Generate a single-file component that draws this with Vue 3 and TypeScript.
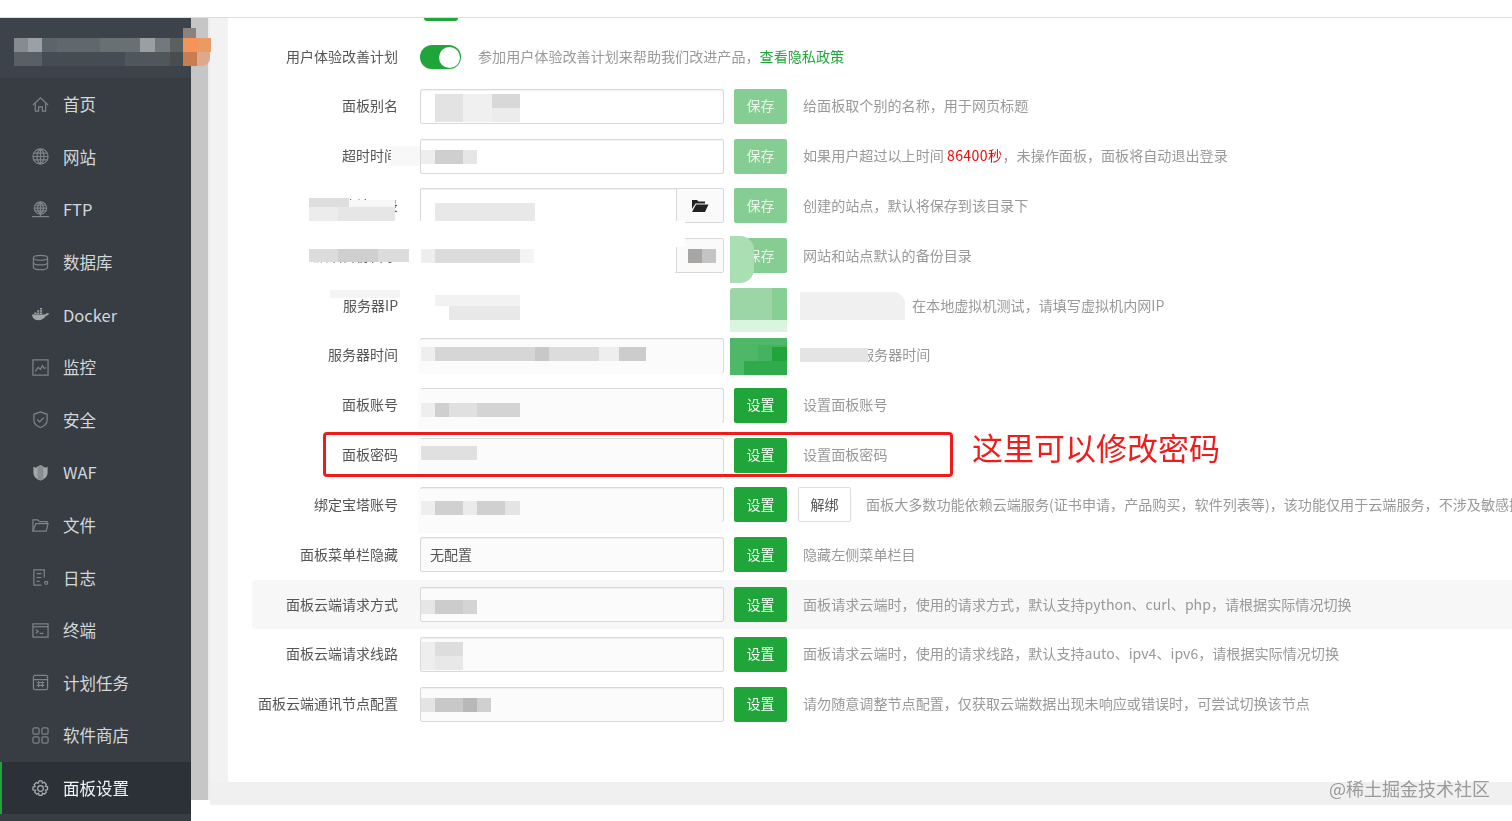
<script setup lang="ts">
interface NavItem { label: string; paths: string[]; filled?: boolean; active?: boolean }
interface DescPart { t: string; c?: string }
interface Row {
  label: string
  btn: string
  desc: DescPart[]
  value?: string
  pale?: boolean
  addon?: boolean
  unbind?: boolean
  shaded?: boolean
  filled?: boolean
  offset?: number
}
type Patch = [number, number, number, number, string, string?]

const nav: NavItem[] = [
  { label: '首页', paths: ['M1 9.5 9 2l8 7.5', 'M3.5 7.5V16H7v-4.5h4V16h3.5V7.5'] },
  { label: '网站', paths: ['M9 1a8 8 0 1 0 0 16a8 8 0 1 0 0-16z', 'M1 9h16M2 5.5h14M2 12.5h14M9 1v16', 'M9 1c-5 4-5 12 0 16M9 1c5 4 5 12 0 16'] },
  { label: 'FTP', paths: ['M9 1a6.5 6.5 0 1 0 0 13a6.5 6.5 0 1 0 0-13z', 'M2.5 7.5h13M9 1v13M3.5 4.5h11M3.5 10.5h11', 'M9 1c-4 3-4 10 0 13M9 1c4 3 4 10 0 13', 'M0 16.5h18M9 14v2.5'] },
  { label: '数据库', paths: ['M1.5 4c0-3.5 15-3.5 15 0v10c0 3.5-15 3.5-15 0z', 'M1.5 4c0 3.5 15 3.5 15 0', 'M1.5 9c0 3.5 15 3.5 15 0'] },
  { label: 'Docker', filled: true, paths: ['M0 9h14c.5-1 2-1.500 4-1-.3 1.500-1.500 2.300-3.300 2.300C13 13.500 10 15 6.500 15 2.500 15 .3 12.500 0 9zM2.500 6.800h2.200v1.700H2.500zM5.500 6.800h2.200v1.700H5.500zM8.500 6.800h2.200v1.700H8.500zM5.500 4.400h2.200v1.700H5.500zM8.500 4.400h2.200v1.700H8.500zM8.500 2h2.200v1.700H8.500z'] },
  { label: '监控', paths: ['M1 1h16v16H1z', 'M3.5 13l3-4 2.5 2 2-4 2 3 2-1'] },
  { label: '安全', paths: ['M9 1l7 2.5v6c0 4-3.5 6.7-7 8-3.5-1.3-7-4-7-8v-6z', 'M5.5 9l2.5 2.5 4.5-4.5'] },
  { label: 'WAF', filled: true, paths: ['M1.5 3l2.5 1 2.5-1.5L9 1l2.5 1.5L14 4l2.500-1v6.500c0 4-3.500 6.700-7.500 8-4-1.300-7.500-4-7.500-8z', 'M6 3.500 9 1l3 2.500v11.500L9 17.500 6 15.500z'] },
  { label: '文件', paths: ['M1 15V3h5l2 2h8v2', 'M1 15h14l2-8H4z'] },
  { label: '日志', paths: ['M13 9V1H2v16h8', 'M5 5h5M5 9h5M5 13h3', 'M15 13a1.600 1.600 0 1 0 0 3.200a1.600 1.600 0 1 0 0-3.200z'] },
  { label: '终端', paths: ['M1 2h16v14H1z', 'M1 5h16', 'M4 8l2.500 2L4 12M8 12h4'] },
  { label: '计划任务', paths: ['M1.500 3A1.500 1.500 0 0 1 3 1.500h12A1.500 1.500 0 0 1 16.500 3v12a1.500 1.500 0 0 1-1.500 1.500H3A1.500 1.500 0 0 1 1.500 15z', 'M1.500 6h15M5 9h8M5 12h8M7 8v6M11 8v6'] },
  { label: '软件商店', paths: ['M1 2.500A1.500 1.500 0 0 1 2.500 1H6a1.500 1.500 0 0 1 1.500 1.500V6A1.500 1.500 0 0 1 6 7.500H2.500A1.500 1.500 0 0 1 1 6z', 'M10.500 2.500A1.500 1.500 0 0 1 12 1h3.500A1.500 1.500 0 0 1 17 2.500V6a1.500 1.500 0 0 1-1.500 1.500H12A1.500 1.500 0 0 1 10.500 6z', 'M1 12a1.500 1.500 0 0 1 1.500-1.500H6A1.500 1.500 0 0 1 7.500 12v3.500A1.500 1.500 0 0 1 6 17H2.500A1.500 1.500 0 0 1 1 15.500z', 'M10.500 12a1.500 1.500 0 0 1 1.500-1.500h3.500A1.500 1.500 0 0 1 17 12v3.500a1.500 1.500 0 0 1-1.500 1.500H12a1.500 1.500 0 0 1-1.500-1.500z'] },
  { label: '面板设置', active: true, paths: ['M9 6a3 3 0 1 0 0 6a3 3 0 1 0 0-6z', 'M7.500 1h3l.5 2.300 2-.9 2.200 2.200-1 2 2.300.6v3l-2.300.6 1 2-2.200 2.200-2-1-.5 2.300h-3l-.5-2.300-2 1-2.200-2.200 1-2L1 10.500v-3l2.300-.6-1-2 2.200-2.200 2 .9z'] },
]

const rows: Row[] = [
  { label: '面板别名', btn: '保存', pale: true, desc: [{ t: '给面板取个别的名称，用于网页标题' }] },
  { label: '超时时间', btn: '保存', pale: true, desc: [{ t: '如果用户超过以上时间 ' }, { t: '86400秒', c: 'red' }, { t: '，未操作面板，面板将自动退出登录' }] },
  { label: '默认建站目录', btn: '保存', pale: true, addon: true, desc: [{ t: '创建的站点，默认将保存到该目录下' }] },
  { label: '默认备份目录', btn: '保存', pale: true, addon: true, desc: [{ t: '网站和站点默认的备份目录' }] },
  { label: '服务器IP', btn: '保存', pale: true, offset: 109, desc: [{ t: '在本地虚拟机测试，请填写虚拟机内网IP' }] },
  { label: '服务器时间', btn: '设置', offset: 57, desc: [{ t: '服务器时间' }] },
  { label: '面板账号', btn: '设置', filled: true, desc: [{ t: '设置面板账号' }] },
  { label: '面板密码', btn: '设置', filled: true, desc: [{ t: '设置面板密码' }] },
  { label: '绑定宝塔账号', btn: '设置', filled: true, unbind: true, desc: [{ t: '面板大多数功能依赖云端服务(证书申请，产品购买，软件列表等)，该功能仅用于云端服务，不涉及敏感操作' }] },
  { label: '面板菜单栏隐藏', btn: '设置', filled: true, value: '无配置', desc: [{ t: '隐藏左侧菜单栏目' }] },
  { label: '面板云端请求方式', btn: '设置', filled: true, shaded: true, desc: [{ t: '面板请求云端时，使用的请求方式，默认支持python、curl、php，请根据实际情况切换' }] },
  { label: '面板云端请求线路', btn: '设置', filled: true, desc: [{ t: '面板请求云端时，使用的请求线路，默认支持auto、ipv4、ipv6，请根据实际情况切换' }] },
  { label: '面板云端通讯节点配置', btn: '设置', filled: true, desc: [{ t: '请勿随意调整节点配置，仅获取云端数据出现未响应或错误时，可尝试切换该节点' }] },
]

const patches: Patch[] = [
  // logo
  [14, 38, 14, 14, '#858b91'], [28, 38, 14, 14, '#9aa0a5'], [42, 38, 15, 14, '#5c656b'], [57, 38, 43, 14, '#5f696d'],
  [100, 38, 40, 14, '#687074'], [140, 38, 15, 14, '#9aa0a2'], [155, 38, 15, 14, '#72797c'], [170, 38, 13, 14, '#5a5f5f'],
  [14, 52, 28, 14, '#585f66'], [42, 52, 83, 14, '#454c53'], [125, 52, 45, 14, '#4f565c'], [170, 52, 13, 14, '#4a4d50'],
  [183, 28, 13, 10, '#8a827c'], [183, 38, 14, 14, '#f59458'], [197, 38, 14, 14, '#eb9a64'], [183, 52, 14, 14, '#c77c52'], [197, 52, 13, 14, '#dda98a', '0 0 8px 0'],
  // white smears
  [400, 128, 300, 9, '#ffffff'], [395, 221, 290, 26, '#ffffff'], [395, 232, 280, 50, '#ffffff'], [310, 240, 100, 22, '#ffffff'],
  [415, 282, 310, 44, '#ffffff'], [418, 340, 304, 34, '#fbfbfb'], [418, 389, 304, 40, '#fbfbfb'], [418, 439, 304, 34, '#fbfbfb'],
  [418, 489, 304, 44, '#fbfbfb'], [391, 146, 29, 20, '#f8f8f8'], [330, 290, 70, 8, '#f4f4f4'],
  // labels
  [345, 200, 50, 8, '#f7f7f7'], [309, 198, 29, 23, '#ececec'], [338, 207, 57, 14, '#e6e6e6'], [309, 198, 40, 9, '#dedede'],
  [309, 249, 100, 13, '#dcdcdc'], [338, 249, 40, 13, '#cfcfcf'],
  // values
  [435, 94, 28, 28, '#e3e3e3'], [463, 94, 29, 28, '#f0f0f0'], [492, 94, 28, 14, '#d8d8d8'], [492, 108, 28, 14, '#ececec'],
  [421, 150, 14, 14, '#eeeeee'], [435, 150, 28, 14, '#cfcfcf'], [463, 150, 14, 14, '#e6e6e6'],
  [435, 203, 100, 18, '#e8e8e8'],
  [421, 249, 14, 14, '#eeeeee'], [435, 249, 85, 14, '#dcdcdc'], [520, 249, 14, 14, '#f4f4f4'], [688, 249, 14, 14, '#a8a6a5'], [702, 249, 14, 14, '#c4c4c4'],
  [435, 295, 85, 11, '#f2f2f2'], [449, 306, 71, 14, '#e8e8e8'],
  [421, 347, 14, 14, '#eeeeee'], [435, 347, 100, 14, '#d6d6d6'], [535, 347, 14, 14, '#c8c8c8'], [549, 347, 50, 14, '#dcdcdc'], [599, 347, 20, 14, '#eeeeee'], [619, 347, 27, 14, '#cccccc'],
  [421, 403, 14, 14, '#eeeeee'], [435, 403, 14, 14, '#cfcfcf'], [449, 403, 28, 14, '#e0e0e0'], [477, 403, 43, 14, '#d4d4d4'],
  [421, 446, 56, 14, '#e0e0e0'],
  [421, 501, 14, 14, '#eeeeee'], [435, 501, 28, 14, '#d0d0d0'], [463, 501, 14, 14, '#ebebeb'], [477, 501, 28, 14, '#d0d0d0'], [505, 501, 15, 14, '#e4e4e4'],
  [421, 600, 14, 14, '#e6e6e6'], [435, 600, 28, 14, '#cccccc'], [463, 600, 14, 14, '#d4d4d4'],
  [421, 642, 14, 28, '#eeeeee'], [435, 642, 28, 14, '#dddddd'], [435, 656, 28, 14, '#e8e8e8'],
  [421, 698, 14, 14, '#e4e4e4'], [435, 698, 28, 14, '#c8c8c8'], [463, 698, 14, 14, '#b8b8b8'], [477, 698, 14, 14, '#d0d0d0'],
  // buttons
  [730, 236, 24, 47, '#a9dfb3', '0 14px 14px 0'], [730, 288, 57, 32, '#9cd6a6', '3px 3px 0 0'], [772, 288, 15, 32, '#88cf96', '0 3px 0 0'], [730, 320, 57, 12, '#daf4de'],
  [730, 338, 57, 37, '#4fb868'], [758, 345, 29, 16, '#44b25f'], [772, 347, 15, 14, '#20a53a'], [744, 361, 43, 14, '#2fab4b'],
  // descriptions
  [800, 292, 105, 28, '#f0f0f0', '0 12px 0 0'], [800, 348, 68, 14, '#e4e4e4'],
]
</script>

<template>
  <div class="page">
    <div class="topbar"></div>
    <div class="body">
      <aside class="sidebar">
        <div class="logo"></div>
        <nav class="nav">
          <div v-for="item in nav" :key="item.label" class="nav-item" :class="{ active: item.active }">
            <svg class="nav-icon" :class="{ solid: item.filled }" viewBox="0 0 18 18">
              <path v-for="d in item.paths" :key="d" :d="d" />
            </svg>
            <span>{{ item.label }}</span>
          </div>
        </nav>
      </aside>
      <div class="track"></div>
      <main class="content">
        <section class="card">
          <div class="stub"></div>
          <div class="row first">
            <div class="label">用户体验改善计划</div>
            <div class="switch"><span class="knob"></span></div>
            <div class="desc switch-desc">参加用户体验改善计划来帮助我们改进产品，<span class="link">查看隐私政策</span></div>
          </div>
          <div v-for="r in rows" :key="r.label" class="row" :class="{ shaded: r.shaded }">
            <div class="label">{{ r.label }}</div>
            <div class="field" :class="{ soft: r.filled }">
              <span class="value">{{ r.value }}</span>
              <span v-if="r.addon" class="addon">
                <svg class="folder" viewBox="0 0 18 18"><path d="M1 3h5l1.500 1.500H14V6.500H4.500L1 12z" /><path d="M5 7.500h12.500L14 15H1z" /></svg>
              </span>
            </div>
            <button class="btn" :class="{ pale: r.pale }">{{ r.btn }}</button>
            <button v-if="r.unbind" class="btn ghost">解绑</button>
            <div class="desc" :style="r.offset ? { paddingLeft: r.offset + 'px' } : undefined">
              <span v-for="p in r.desc" :key="p.t" :class="p.c">{{ p.t }}</span>
            </div>
          </div>
        </section>
        <div class="footer-gap"></div>
        <div class="footer-white"></div>
      </main>
    </div>

    <div class="mosaic">
      <i
        v-for="(p, i) in patches"
        :key="i"
        :style="{ left: p[0] + 'px', top: p[1] + 'px', width: p[2] + 'px', height: p[3] + 'px', background: p[4], borderRadius: p[5] }"
      ></i>
    </div>
    <div class="callout"></div>
    <div class="callout-text">这里可以修改密码</div>
    <div class="watermark">@稀土掘金技术社区</div>
  </div>
</template>

<style>
html, body { margin: 0; background: #fff; overflow: hidden; }
</style>

<style scoped>
.page {
  position: relative;
  width: 1512px;
  height: 821px;
  overflow: hidden;
  display: flex;
  flex-direction: column;
  font-family: "Noto Sans CJK SC", "Liberation Sans", sans-serif;
  font-size: 14px;
  filter: blur(0.35px);
}
.topbar { height: 18px; flex: none; box-sizing: border-box; border-bottom: 1px solid #dcdcdc; background: #fff; }
.body { flex: 1; display: flex; min-height: 0; }
.sidebar { width: 191px; flex: none; background: #373d43; display: flex; flex-direction: column; }
.logo { height: 60px; flex: none; background: #3c434a; }
.nav { display: flex; flex-direction: column; }
.nav-item {
  height: 52.6px;
  box-sizing: border-box;
  display: flex;
  align-items: center;
  gap: 14px;
  padding-left: 32px;
  color: #d3d7da;
  font-size: 16.5px;
}
.nav-item.active { background: #2c3138; color: #f2f3f4; border-left: 2px solid #20a53a; padding-left: 30px; }
.nav-icon { width: 17px; height: 17px; flex: none; fill: none; stroke: #7d8388; stroke-width: 1.300; }
.nav-icon.solid { fill: #a4a7aa; stroke: none; }
.nav-icon.solid path + path { fill: #8a8d90; }
.active .nav-icon { stroke: #a9adb0; }
.track { width: 19px; height: 782px; flex: none; background: #c6c6c6; border-right: 2px solid #ececec; box-sizing: border-box; }
.content { flex: 1; min-width: 0; display: flex; flex-direction: column; background: #f2f2f2; }
.card {
  height: 764px;
  flex: none;
  box-sizing: border-box;
  margin-left: 18px;
  padding: 0 0 0 24px;
  background: #fff;
  overflow: hidden;
}
.stub { width: 34px; height: 3px; margin: 0 0 10.500px 172px; background: #20a53a; border-radius: 0 0 14px 14px; }
.row { height: 49.830px; display: flex; align-items: center; white-space: nowrap; }
.row.shaded { background: #f7f7f7; border-radius: 4px 0 0 4px; }
.label { width: 146px; flex: none; text-align: right; color: #555; margin-right: 22px; line-height: 20px; padding-bottom: 2px; }
.first .label, .first .desc { padding-bottom: 0; }
.switch {
  width: 41px;
  height: 24px;
  flex: none;
  margin-top: 2px;
  border-radius: 12px;
  background: #20a53a;
  position: relative;
  box-shadow: 0 1px 1px rgba(0, 0, 0, .1);
}
.knob { position: absolute; right: 1.500px; top: 1.500px; width: 21px; height: 21px; border-radius: 50%; background: #fff; }
.switch-desc { margin-left: 17px !important; }
.link { color: #20a53a; }
.field {
  width: 304px;
  height: 35px;
  flex: none;
  box-sizing: border-box;
  border: 1px solid #d9d9d9;
  border-radius: 2px;
  background: #fff;
  display: flex;
  align-items: center;
  padding-left: 9px;
  position: relative;
  color: #555;
  box-shadow: inset 0 1px 1px rgba(0, 0, 0, .05);
}
.field.soft { background: #fbfbfb; }
.value { flex: 1; line-height: 20px; padding-bottom: 1px; }
.addon {
  position: absolute;
  right: 0;
  top: 0;
  bottom: 0;
  width: 46px;
  background: #fafafa;
  border-left: 1px solid #d9d9d9;
  display: flex;
  align-items: center;
  justify-content: center;
}
.folder { width: 18px; height: 18px; fill: #222; }
.btn {
  width: 53px;
  height: 35px;
  flex: none;
  box-sizing: border-box;
  margin: 0 0 0 10px;
  padding: 0 0 2px;
  border: 0;
  border-radius: 2px;
  background: #20a53a;
  color: #fff;
  font: inherit;
  line-height: 20px;
}
.btn.pale { background: #85cd93; color: #e6f6e9; }
.btn.ghost { background: #fff; color: #555; border: 1px solid #ddd; margin-left: 11px; }
.desc { margin-left: 16px; color: #999; font-size: 14.08px; line-height: 20px; padding-bottom: 2px; }
.btn.ghost + .desc { margin-left: 15px; }
.red { color: #ef0808; letter-spacing: .4px; }
.footer-gap { height: 23px; flex: none; background: #f0f0f0; }
.footer-white { flex: 1; background: #fff; }
.mosaic { position: absolute; inset: 0; pointer-events: none; }
.mosaic i { position: absolute; display: block; }
.callout {
  position: absolute;
  left: 323px;
  top: 432px;
  width: 630px;
  height: 45px;
  box-sizing: border-box;
  border: 3px solid #f01c1c;
  border-radius: 4px;
}
.callout-text { position: absolute; left: 972px; top: 424px; font-size: 31px; line-height: 45px; color: #f01c1c; white-space: nowrap; }
.watermark { position: absolute; left: 1329px; top: 775px; font-size: 18px; line-height: 26px; color: #9a9a9a; white-space: nowrap; }
</style>
